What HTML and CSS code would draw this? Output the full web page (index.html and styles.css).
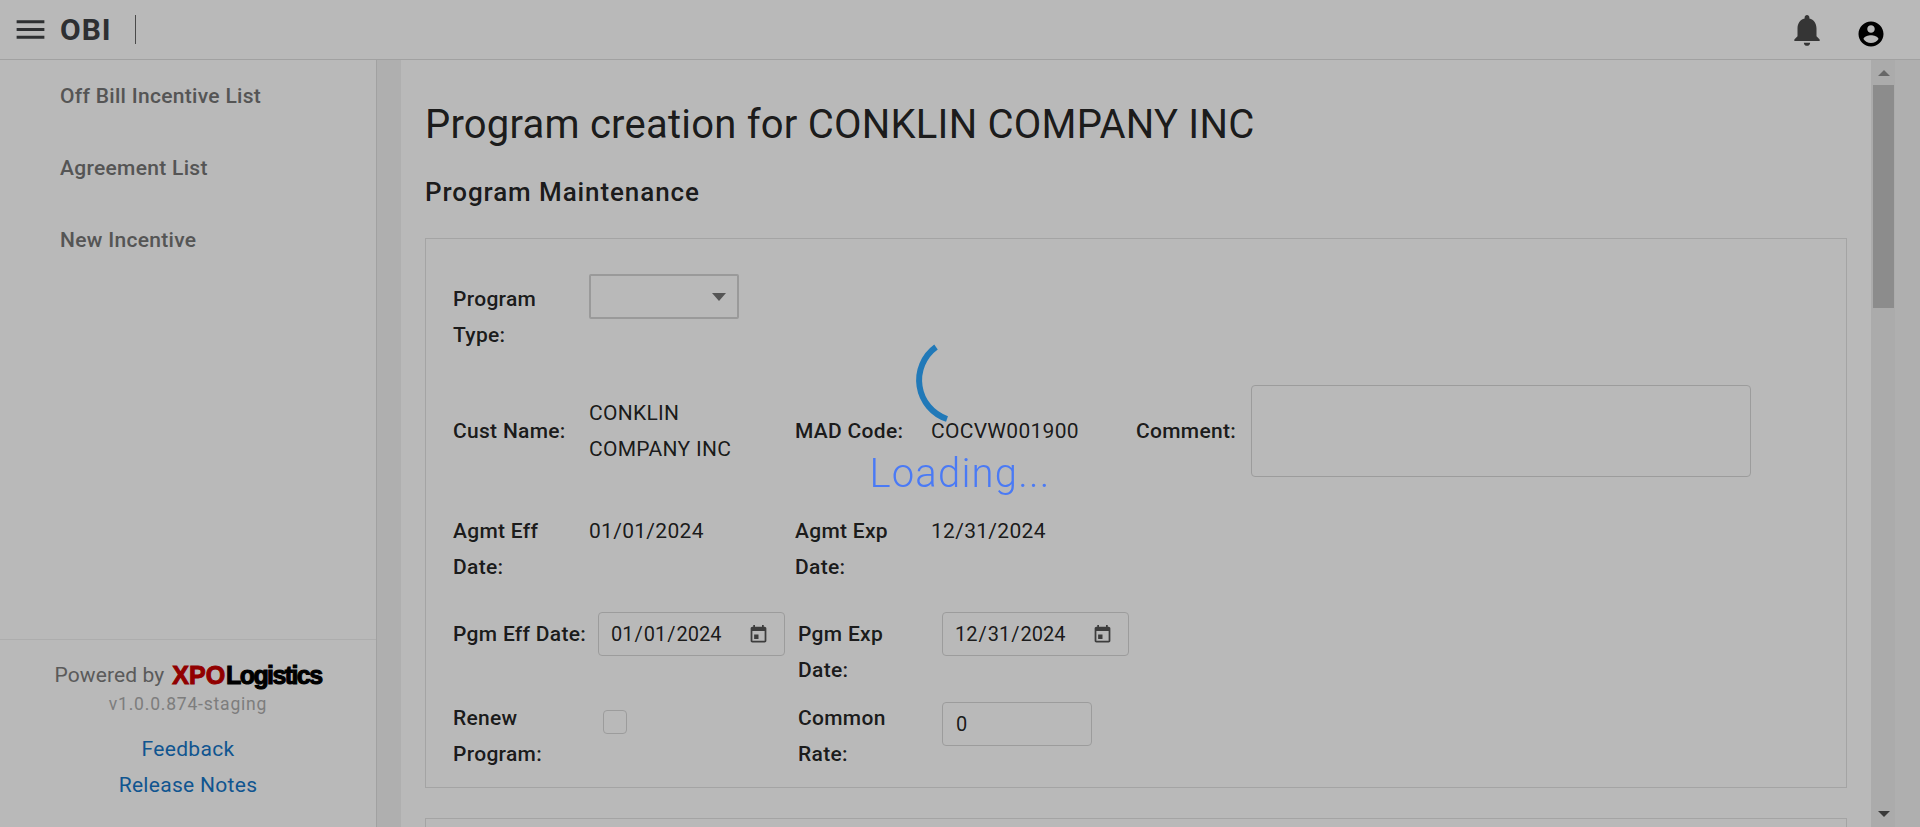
FILE: index.html
```html
<!DOCTYPE html>
<html lang="en">
<head>
    <meta charset="UTF-8">
    <meta name="viewport" content="width=device-width, initial-scale=1.0">
    <title>OBI - Program creation</title>
    <link rel="stylesheet" href="styles.css">
</head>
<body>
    <header class="topbar">
        <svg class="menu-icon" viewBox="0 0 24 24"><path d="M3 18h18v-2H3v2zm0-5h18v-2H3v2zm0-7v2h18V6H3z"/></svg>
        <span class="brand">OBI</span>
        <span class="brand-divider"></span>
        <svg class="bell-icon" viewBox="0 0 24 24"><path d="M12 22c1.1 0 2-.9 2-2h-4c0 1.1.89 2 2 2zm6-6v-5c0-3.07-1.64-5.64-4.5-6.32V4c0-.83-.67-1.5-1.5-1.5s-1.5.67-1.5 1.5v.68C7.63 5.36 6 7.92 6 11v5l-2 2v1h16v-1l-2-2z"/></svg>
        <svg class="account-icon" viewBox="0 0 24 24"><path d="M12 2C6.48 2 2 6.48 2 12s4.48 10 10 10 10-4.48 10-10S17.52 2 12 2zm0 3c1.66 0 3 1.34 3 3s-1.34 3-3 3-3-1.34-3-3 1.34-3 3-3zm0 14.2c-2.5 0-4.71-1.28-6-3.22.03-1.99 4-3.08 6-3.08 1.99 0 5.97 1.09 6 3.08-1.29 1.94-3.5 3.22-6 3.22z"/></svg>
    </header>

    <div class="shell">
        <aside class="sidebar">
            <nav class="side-nav">
                <a href="#">Off Bill Incentive List</a>
                <a href="#">Agreement List</a>
                <a href="#">New Incentive</a>
            </nav>
            <div class="side-footer">
                <div class="powered">Powered by <span class="logo"><span class="logo-xpo">XPO</span><span class="logo-name">Logistics</span></span></div>
                <div class="version">v1.0.0.874-staging</div>
                <a class="foot-link" href="#">Feedback</a>
                <a class="foot-link" href="#">Release Notes</a>
            </div>
        </aside>
        <div class="gutter"></div>

        <main class="content">
            <h1>Program creation for CONKLIN COMPANY INC</h1>
            <h2>Program Maintenance</h2>

            <section class="panel">
                <div class="row row-wide row-type">
                    <label class="field-label">Program Type:</label>
                    <div class="select-wrap">
                        <select class="select-box"><option></option></select>
                        <span class="select-arrow"></span>
                    </div>
                </div>

                <div class="row row-wide row-customer">
                    <label class="field-label">Cust Name:</label>
                    <div class="field-value">CONKLIN COMPANY INC</div>
                    <label class="field-label">MAD Code:</label>
                    <div class="field-value">COCVW001900</div>
                    <label class="field-label">Comment:</label>
                    <textarea class="comment-box"></textarea>
                </div>

                <div class="row row-wide row-agreement">
                    <label class="field-label">Agmt Eff Date:</label>
                    <div class="field-value">01/01/2024</div>
                    <label class="field-label">Agmt Exp Date:</label>
                    <div class="field-value">12/31/2024</div>
                </div>

                <div class="row row-narrow row-dates">
                    <label class="field-label">Pgm Eff Date:</label>
                    <input class="text-input date-input" type="date" value="2024-01-01">
                    <label class="field-label">Pgm Exp Date:</label>
                    <input class="text-input date-input" type="date" value="2024-12-31">
                </div>

                <div class="row row-narrow row-renew">
                    <label class="field-label">Renew Program:</label>
                    <input class="check-box" type="checkbox">
                    <label class="field-label">Common Rate:</label>
                    <input class="text-input rate-input" type="text" value="0">
                </div>
            </section>

            <section class="panel panel-next"></section>
        </main>

        <div class="scrollbar">
            <span class="arrow-up"></span>
            <span class="thumb"></span>
            <span class="arrow-down"></span>
        </div>
        <div class="gutter gutter-outer"></div>
    </div>

    <div class="loading-overlay">
        <svg class="spinner" viewBox="0 0 100 100"><path d="M26 17A41 41 0 0 0 37 89"/></svg>
        <div class="loading-text">Loading...</div>
    </div>
</body>
</html>
```

FILE: styles.css
```css
body {
    font-family: Roboto, "Liberation Sans", sans-serif;
    font-size: 21px;
    letter-spacing: 0.3px;
    color: rgba(0, 0, 0, 0.87);
    background-color: #fff;
    margin: 0;
    height: 100vh;
    overflow: hidden;
    display: flex;
    flex-direction: column;
}

a {
    text-decoration: none;
}

/* top bar */
.topbar {
    height: 59px;
    flex-shrink: 0;
    display: flex;
    align-items: center;
    padding-left: 12px;
    border-bottom: 1px solid #dedede;
}

.menu-icon {
    width: 37px;
    height: 37px;
    fill: #404346;
}

.brand {
    font-size: 30px;
    font-weight: 700;
    letter-spacing: 1px;
    color: #404346;
    margin-left: 11px;
}

.brand-divider {
    width: 1px;
    height: 29px;
    background-color: #666;
    margin-left: 23px;
}

.bell-icon {
    width: 38px;
    height: 38px;
    fill: #4a4a4a;
    margin-left: auto;
}

.account-icon {
    width: 30px;
    height: 30px;
    fill: #000;
    margin: 8px 34px 0 30px;
}

/* page columns */
.shell {
    flex: 1;
    display: flex;
    min-height: 0;
}

.sidebar {
    width: 376px;
    flex-shrink: 0;
    display: flex;
    flex-direction: column;
    border-right: 1px solid #dedede;
}

.gutter {
    width: 24px;
    flex-shrink: 0;
    background-color: #f1f1f1;
}

.gutter-outer {
    width: 25px;
}

.side-nav {
    display: flex;
    flex-direction: column;
    padding: 0 0 0 60px;
}

.side-nav a {
    height: 72px;
    line-height: 72px;
    font-weight: 500;
    color: #757575;
}

.side-footer {
    margin-top: auto;
    height: 188px;
    box-sizing: border-box;
    padding-top: 20px;
    border-top: 1px solid #efefef;
    display: flex;
    flex-direction: column;
    align-items: center;
    text-align: center;
}

.powered {
    line-height: 30px;
    letter-spacing: 0.1px;
    color: #7d7d7d;
    display: flex;
    align-items: center;
}

.logo {
    margin-left: 8px;
    font-family: "Liberation Sans", sans-serif;
    font-weight: 700;
    font-size: 25px;
    -webkit-text-stroke: 1px;
    display: flex;
}

.logo-xpo {
    color: #c80000;
    letter-spacing: 0;
}

.logo-name {
    color: #000;
    letter-spacing: -1.6px;
    margin-left: 1px;
}

.version {
    font-size: 17.5px;
    line-height: 28px;
    letter-spacing: 0.8px;
    color: #adadad;
}

.foot-link {
    line-height: 36px;
    color: #1676c7;
}

.version + .foot-link {
    margin-top: 13px;
}

/* main content */
.content {
    flex: 1;
    min-width: 0;
    padding: 0 24px;
    overflow: hidden;
}

h1 {
    font-size: 40px;
    line-height: 48px;
    font-weight: 400;
    letter-spacing: 0.22px;
    margin: 41px 0 27px;
}

h2 {
    font-size: 26px;
    line-height: 32px;
    font-weight: 500;
    letter-spacing: 0.9px;
    margin: 0 0 30px;
}

.panel {
    border: 1px solid #e2e2e2;
    padding: 0 0 15px 27px;
}

.panel-next {
    margin-top: 30px;
    height: 200px;
}

.row {
    display: grid;
}

.row-wide {
    grid-template-columns: 136px 206px 136px 205px 115px 500px;
}

.row-narrow {
    grid-template-columns: 145px 200px 144px 200px;
}

.field-label {
    font-weight: 500;
    line-height: 36px;
    padding-right: 6px;
}

.field-value {
    line-height: 36px;
    padding-right: 30px;
}

.row-type {
    margin-top: 35px;
}

.row-type .field-label {
    padding-top: 7px;
}

.select-wrap {
    position: relative;
    width: 150px;
    height: 45px;
}

.select-box {
    width: 100%;
    height: 100%;
    appearance: none;
    background: #fff;
    border: 2px solid #d4d4d4;
    border-radius: 2px;
}

.select-arrow {
    position: absolute;
    right: 13px;
    top: 19px;
    border-left: 7px solid transparent;
    border-right: 7px solid transparent;
    border-top: 8px solid #757575;
}

.row-customer {
    margin-top: 32px;
    align-items: center;
}

.comment-box {
    height: 92px;
    box-sizing: border-box;
    border: 1px solid #d8d8d8;
    border-radius: 4px;
    resize: none;
    display: block;
}

.row-agreement {
    margin-top: 36px;
}

.row-dates {
    margin-top: 27px;
}

.row-dates .field-label {
    padding-top: 4px;
}

.row-renew {
    margin-top: 12px;
}

.text-input {
    height: 44px;
    box-sizing: border-box;
    border: 1px solid #d8d8d8;
    border-radius: 4px;
    padding: 0 12px;
    font-family: Roboto, sans-serif;
    font-size: 20px;
    letter-spacing: 0;
    color: rgba(0, 0, 0, 0.87);
    background-color: #fff;
}

.date-input {
    width: 187px;
    padding-left: 11px;
}

.date-input::-webkit-calendar-picker-indicator {
    width: 21px;
    height: 21px;
    padding: 0;
    margin: 0 3px 0 0;
    background: url("data:image/svg+xml,%3Csvg xmlns='http://www.w3.org/2000/svg' viewBox='0 0 24 24'%3E%3Cpath fill='%23555' d='M12 12H7v5h5v-5zM16 1v2H8V1H6v2H5c-1.11 0-1.99.9-1.99 2L3 19c0 1.1.89 2 2 2h14c1.1 0 2-.9 2-2V5c0-1.1-.9-2-2-2h-1V1h-2zm3 18H5V8h14v11z'/%3E%3C/svg%3E") no-repeat center / contain;
}

.rate-input {
    width: 150px;
    margin-top: 2px;
    padding-left: 13px;
}

.check-box {
    appearance: none;
    width: 24px;
    height: 24px;
    margin: 10px 0 0 5px;
    border: 1px solid #d8d8d8;
    border-radius: 4px;
    background-color: #fff;
}

/* fake scroll bar, the page itself does not scroll */
.scrollbar {
    width: 24px;
    flex-shrink: 0;
    position: relative;
    background-color: #ececec;
}

.arrow-up {
    position: absolute;
    left: 7px;
    top: 10px;
    border-left: 6px solid transparent;
    border-right: 6px solid transparent;
    border-bottom: 6px solid #8f8f8f;
}

.thumb {
    position: absolute;
    left: 2px;
    top: 25px;
    width: 21px;
    height: 223px;
    background-color: #c1c1c1;
}

.arrow-down {
    position: absolute;
    left: 7px;
    bottom: 10px;
    border-left: 6px solid transparent;
    border-right: 6px solid transparent;
    border-top: 6px solid #505050;
}

/* loading overlay */
.loading-overlay {
    position: fixed;
    top: 0;
    left: 0;
    right: 0;
    bottom: 0;
    background-color: rgba(0, 0, 0, 0.275);
    display: flex;
    flex-direction: column;
    align-items: center;
    justify-content: center;
}

.spinner {
    width: 100px;
    height: 100px;
    fill: none;
    stroke: #2179b8;
    stroke-width: 6;
}

.loading-text {
    font-size: 40px;
    font-weight: 300;
    line-height: 47px;
    letter-spacing: 1.2px;
    margin-top: 20px;
    color: #4a7af5;
}
```
